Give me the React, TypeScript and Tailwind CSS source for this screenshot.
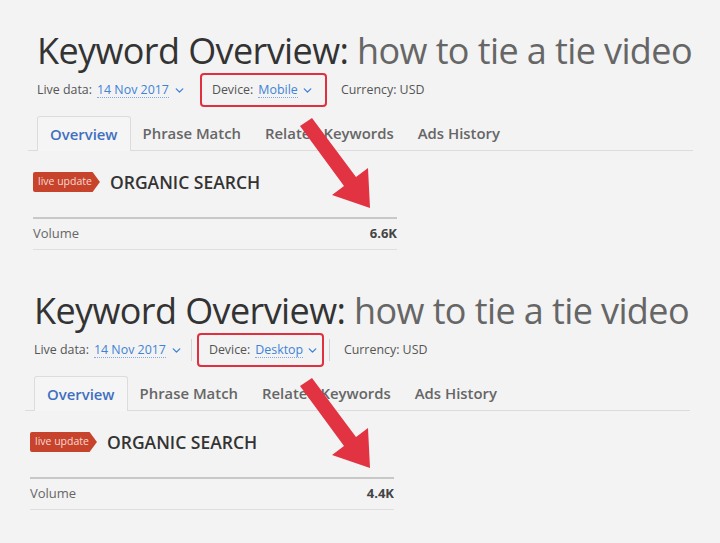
import { ChevronDown } from "lucide-react";

interface SectionProps {
  device: string;
  volume: string;
  separators?: boolean;
  shiftClass: string;
}

const tabs = ["Overview", "Phrase Match", "Related Keywords", "Ads History"];

const Section: React.FC<SectionProps> = ({ device, volume, separators, shiftClass }) => {
  return (
    <div className={`h-[260px] pt-[30px] ${shiftClass}`}>
      <h1 className="ml-[9px] text-[36px] leading-[42px] tracking-[-0.6px] whitespace-nowrap text-[#333]">
        Keyword Overview: <span className="text-[#666]">how to tie a tie video</span>
      </h1>

      <div className="ml-[9px] mt-[1px] flex h-[34px] items-center text-[12.4px] text-[#555]">
        <span>Live data:</span>
        <span className="ml-[5px] flex items-center text-[#3d83d6]">
          <span className="border-b border-dotted border-[#7fa9e0] leading-[15px]">14 Nov 2017</span>
          <ChevronDown className="ml-[4px] h-[13px] w-[13px]" strokeWidth={2.5} />
        </span>
        {separators ? <span className="ml-[8px] h-[22px] w-px bg-[#d4d4d4]" /> : <span className="ml-[9px]" />}
        <div className="ml-[5px] flex h-[34px] w-[127px] items-center rounded-[4px] border-2 border-[#e0303f] pl-[10px]">
          <span>Device:</span>
          <span className="ml-[5px] flex items-center text-[#3d83d6]">
            <span className="border-b border-dotted border-[#7fa9e0] leading-[15px]">{device}</span>
            <ChevronDown className="ml-[3px] h-[13px] w-[13px]" strokeWidth={2.5} />
          </span>
        </div>
        {separators && <span className="ml-[5px] h-[22px] w-px bg-[#d4d4d4]" />}
        <span className={separators ? "ml-[14px]" : "ml-[14px]"}>Currency: USD</span>
      </div>

      <div className="mt-[9px] flex w-[665px] border-b border-[#dcdcdc] pl-[9px] text-[14.9px] font-semibold text-[#666]">
        {tabs.map((t, i) =>
          i === 0 ? (
            <div
              key={t}
              className="mb-[-1px] flex h-[35px] items-center rounded-t-[3px] border border-b-0 border-[#dcdcdc] bg-[#f5f5f5] px-[12px] text-[#3f70c0]"
            >
              {t}
            </div>
          ) : (
            <div key={t} className="flex h-[34px] items-center px-[12px]">
              {t}
            </div>
          )
        )}
      </div>

      <div className="ml-[5px] mt-[21px] flex h-[20px] items-center">
        <span className="flex h-[20px] items-center rounded-l-[2px] bg-[#c8432b] pl-[5px] pr-[8px] text-[10.5px] text-[#f6d9d2] [clip-path:polygon(0_0,89%_0,100%_50%,89%_100%,0_100%)]">
          live update
        </span>
        <span className="ml-[10px] text-[17.5px] font-semibold text-[#333]">ORGANIC SEARCH</span>
      </div>

      <div className="ml-[5px] mt-[25px] flex h-[33px] w-[364px] items-center justify-between border-t-2 border-b border-t-[#c8c8c8] border-b-[#dedede] text-[13px]">
        <span className="text-[#666]">Volume</span>
        <span className="font-bold text-[#444]">{volume}</span>
      </div>
    </div>
  );
};

const Arrow: React.FC<{ dy: number }> = ({ dy }) => (
  <polygon
    transform={`translate(0 ${dy})`}
    points="300,126 312,118 356,177 368,168 370,208 332,195 344,186"
    fill="#e23343"
  />
);

export default function App() {
  return (
    <div
      className="relative h-[543px] w-[720px] overflow-hidden bg-[#f3f3f3]"
      style={{ fontFamily: '"Open Sans", "Noto Sans", sans-serif' }}
    >
      <Section device="Mobile" volume="6.6K" shiftClass="pl-[28px]" />
      <Section device="Desktop" volume="4.4K" separators shiftClass="pl-[25px]" />
      <svg className="pointer-events-none absolute inset-0" width="720" height="543">
        <Arrow dy={0} />
        <Arrow dy={260} />
      </svg>
    </div>
  );
}
